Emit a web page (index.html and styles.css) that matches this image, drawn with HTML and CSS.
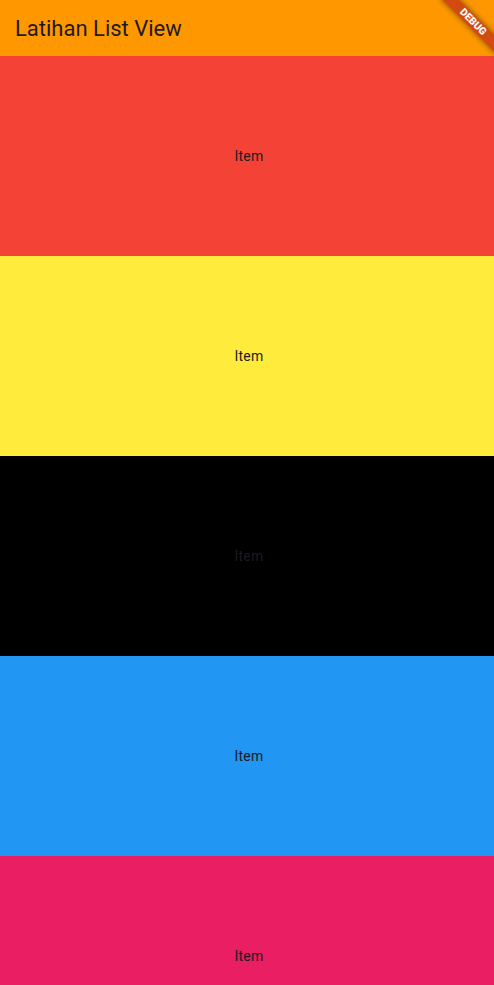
FILE: index.html
```html
<!DOCTYPE html>
<html>
<head>
<meta charset="utf-8">
<link rel="stylesheet" href="styles.css">
</head>
<body>
<header class="appbar"><h1 class="title">Latihan List View</h1></header>
<main class="list">
  <div class="item red">Item</div>
  <div class="item yellow">Item</div>
  <div class="item black">Item</div>
  <div class="item blue">Item</div>
  <div class="item pink">Item</div>
</main>
<div class="banner">DEBUG</div>
</body>
</html>
```
FILE: styles.css
```css
html, body { margin: 0; padding: 0; }
body {
  width: 494px;
  height: 985px;
  overflow: hidden;
  position: relative;
  font-family: Roboto, "Noto Sans", sans-serif;
  background: #fafafa;
}
.appbar {
  height: 56px;
  background: #FF9800;
  display: flex;
  align-items: center;
  padding: 0 15px;
}
.title {
  margin: 0;
  font-size: 22px;
  font-weight: 400;
  color: #1d1b20;
}
.list { display: flex; flex-direction: column; }
.item {
  height: 200px;
  flex: none;
  display: flex;
  align-items: center;
  justify-content: center;
  padding-left: 4px;
  font-size: 14px;
  letter-spacing: 0.25px;
  color: #1d1b20;
}
.red { background: #F44336; }
.yellow { background: #FFEB3B; }
.black { background: #000000; color: #1d1b20; }
.blue { background: #2196F3; }
.pink { background: #E91E63; }
.banner {
  position: absolute;
  left: 433px;
  top: 16px;
  width: 80px;
  height: 12px;
  line-height: 12px;
  transform: rotate(45deg);
  background: rgba(183,28,28,0.63);
  box-shadow: 0 0 6px rgba(0,0,0,0.5);
  color: #fff;
  font-size: 10.2px;
  font-weight: 900;
  text-align: center;
}
```
